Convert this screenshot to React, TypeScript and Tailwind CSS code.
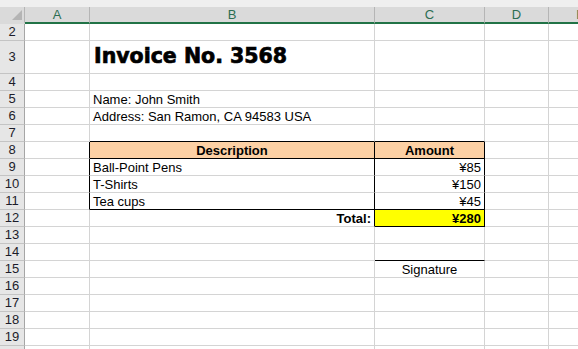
type CellDef = {
  text?: string;
  align?: 'left' | 'center' | 'right';
  bold?: boolean;
  bg?: string;
  rb?: boolean;
  bb?: boolean;
  title?: boolean;
};

const columns = ['A', 'B', 'C', 'D', 'E'];
const rowNums = [2, 3, 4, 5, 6, 7, 8, 9, 10, 11, 12, 13, 14, 15, 16, 17, 18, 19, 20];

// sheet content keyed by "row:col"
const cells: Record<string, CellDef> = {
  '3:B': { text: 'Invoice No. 3568', title: true },
  '5:B': { text: 'Name: John Smith' },
  '6:B': { text: 'Address: San Ramon, CA 94583 USA' },
  '7:B': { bb: true },
  '7:C': { bb: true },
  '8:A': { rb: true },
  '9:A': { rb: true },
  '10:A': { rb: true },
  '11:A': { rb: true },
  '8:B': { text: 'Description', align: 'center', bold: true, bg: 'peach', rb: true, bb: true },
  '8:C': { text: 'Amount', align: 'center', bold: true, bg: 'peach', rb: true, bb: true },
  '9:B': { text: 'Ball-Point Pens', rb: true },
  '9:C': { text: '¥85', align: 'right', rb: true },
  '10:B': { text: 'T-Shirts', rb: true },
  '10:C': { text: '¥150', align: 'right', rb: true },
  '11:B': { text: 'Tea cups', rb: true, bb: true },
  '11:C': { text: '¥45', align: 'right', rb: true, bb: true },
  '12:B': { text: 'Total:', align: 'right', bold: true, rb: true },
  '12:C': { text: '¥280', align: 'right', bold: true, bg: 'yellow', rb: true, bb: true },
  '14:C': { bb: true },
  '15:C': { text: 'Signature', align: 'center' },
};

function Cell({ def }: { def?: CellDef }) {
  const d = def || {};
  const justify =
    d.align === 'center' ? 'justify-center' : d.align === 'right' ? 'justify-end pr-[3px]' : 'justify-start pl-[3px]';
  const bg = d.bg === 'peach' ? 'bg-[#fcd0a4]' : d.bg === 'yellow' ? 'bg-[#ffff00]' : 'bg-white';
  return (
    <div
      className={`flex items-end overflow-hidden whitespace-nowrap border-r border-b ${bg} ${
        d.rb ? 'border-r-black' : 'border-r-[#d4d4d4]'
      } ${d.bb ? 'border-b-black' : 'border-b-[#d4d4d4]'} ${justify}`}
    >
      {d.title ? (
        <span className="pl-[1px] pb-[5px] text-[20.5px] leading-[24px] font-bold text-black [font-family:'DejaVu_Sans',sans-serif] [-webkit-text-stroke:0.7px_black]">
          {d.text}
        </span>
      ) : d.text ? (
        <span className={`text-[13px] leading-[14px] text-black ${d.bold ? 'font-bold' : ''}`}>{d.text}</span>
      ) : null}
    </div>
  );
}

export default function App() {
  return (
    <div className="w-[578px] h-[349px] overflow-hidden bg-white font-['Liberation_Sans',Arial,sans-serif]">
      <div className="h-[7px] bg-[#efefef]" />
      <div className="grid h-[17px] grid-cols-[25px_65px_285px_110px_64px_64px] bg-[#dadada]">
        <div className="relative border-r border-r-[#b5b5b5] border-b-2 border-b-[#dadada]">
          <div className="absolute right-[2px] bottom-[2px] h-0 w-0 border-l-[10px] border-t-[10px] border-l-transparent border-t-transparent border-b-0 border-r-[10px] border-r-[#b4b4b4]" />
        </div>
        {columns.map((c) => (
          <div
            key={c}
            className="flex items-center justify-center border-r border-r-[#b5b5b5] border-b-2 border-b-[#217346] text-[13px] leading-[15px] text-[#2c6e52]"
          >
            {c}
          </div>
        ))}
      </div>
      <div className="grid grid-cols-[25px_65px_285px_110px_64px_64px] grid-rows-[17px_33px_repeat(17,17px)]">
        {rowNums.map((r) => (
          <div key={r} className="contents">
            <div className="flex items-center justify-center border-r border-b border-r-[#a6a6a6] border-b-[#c4c4c4] bg-[#e6e6e6] text-[13px] leading-[14px] text-[#1c1c2a]">
              {r < 20 ? r : ''}
            </div>
            {columns.map((c) => (
              <Cell key={c} def={cells[`${r}:${c}`]} />
            ))}
          </div>
        ))}
      </div>
    </div>
  );
}
